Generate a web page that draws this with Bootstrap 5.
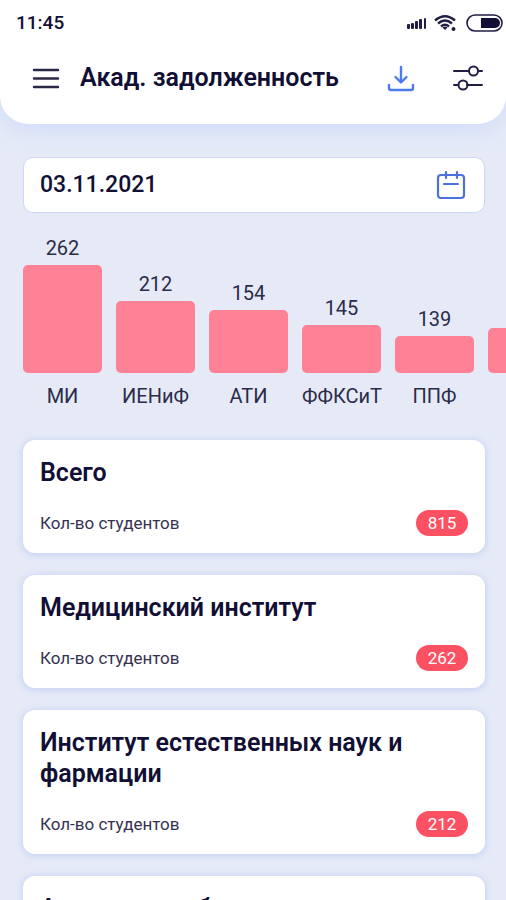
<!DOCTYPE html>
<html lang="ru">
<head>
<meta charset="utf-8">
<meta name="viewport" content="width=device-width, initial-scale=1">
<title>Акад. задолженность</title>
<link href="https://cdn.jsdelivr.net/npm/bootstrap@5.3.0/dist/css/bootstrap.min.css" rel="stylesheet">
<script src="https://cdn.jsdelivr.net/npm/bootstrap@5.3.0/dist/js/bootstrap.bundle.min.js" defer></script>
<style>
body{font-family:Roboto,"Liberation Sans",sans-serif;background:#e5eaf6;color:#120f35;overflow-x:hidden}
.screen{height:100vh;overflow:hidden}
.top-panel{border-radius:0 0 28px 28px;box-shadow:0 6px 24px #cfdcf8;padding-bottom:20px}
.status{height:44px;padding:3px 2px 0 16px;font-size:19px;font-weight:500}
.tools{height:60px;padding:8px 21px 0 31px}
.page-title{font-size:25px;line-height:32px;font-weight:600;margin-left:19px}
.icon-btn{line-height:0}
.filter-btn{margin-left:36px}
.content{padding:33px 21px 0 23px}
.date-box{height:56px;border:1px solid #ccd7f8;border-radius:10px;padding:0 16px}
.date-input{font-size:23px;line-height:32px;font-weight:500;color:#120f35}
.date-input:focus{color:#120f35}
.chart{height:195px;margin-right:-21px;gap:14px;overflow:hidden}
.chart-col{flex:0 0 79px;min-width:0;font-size:20px;line-height:24px;color:#2b2b4a;white-space:nowrap}
.bar{border-radius:5px;background:#ff8196;margin:5px 0 11px}
.cards{margin-top:32px;gap:22px}
.info-card{border-radius:12px;box-shadow:0 1px 7px 1px #c5d2f5;padding:17px}
.info-title{font-size:25px;line-height:31px;font-weight:600}
.info-row{margin-top:22px;font-size:17px;line-height:26px;color:#34324f}
.count{background:#fc5163;width:52px;font-size:17px;line-height:26px;padding:0;font-weight:400}
</style>
</head>
<body>
<div class="screen">
<header class="top-panel bg-white">
  <div class="status d-flex align-items-center justify-content-between">
    <span>11:45</span>
    <svg width="98" height="22" viewBox="0 0 98 22" aria-hidden="true">
      <g fill="#211e43"><rect x="1" y="11" width="3" height="5" rx="1"/><rect x="5" y="10" width="3" height="6" rx="1"/><rect x="9" y="8" width="3" height="8" rx="1"/><rect x="13" y="6" width="3" height="10" rx="1"/><rect x="18" y="5" width="2" height="11" rx="1"/></g>
      <g fill="none" stroke="#211e43" stroke-width="2.4"><path d="M29 7.500Q39 -1 49 7.500M32 10.500Q39 4.500 46 10.500M35 13.500Q39 10 43 13.500"/></g>
      <path d="M36.500 14.500Q39 12.500 41.500 14.500L39 17z" fill="#211e43"/><circle cx="47.500" cy="16" r="2" fill="#211e43"/>
      <rect x="61" y="2" width="35" height="16" rx="8" fill="#fff" stroke="#211e43" stroke-width="1.600"/><path d="M75 5h14a5 5 0 0 1 0 10H75z" fill="#120f35"/>
    </svg>
  </div>
  <div class="tools d-flex align-items-center">
    <button class="icon-btn btn p-0 border-0" type="button" aria-label="Меню"><svg width="30" height="24" viewBox="0 0 30 24" fill="none" stroke="#2a2847" stroke-width="2.400" stroke-linecap="round"><path d="M3 4h24M3 12.500h24M3 21h24"/></svg></button>
    <h1 class="page-title mb-0 me-auto text-nowrap">Акад. задолженность</h1>
    <button class="icon-btn btn p-0 border-0" type="button" aria-label="Скачать"><svg width="28" height="28" viewBox="0 0 28 28" fill="none" stroke="#4c7bf0" stroke-width="2.400" stroke-linecap="round" stroke-linejoin="round"><path d="M14 3v15M8.500 13l5.500 5.500 5.500-5.500M2 21v3q0 2 2 2h20q2 0 2-2v-3"/></svg></button>
    <button class="filter-btn icon-btn btn p-0 border-0" type="button" aria-label="Фильтры"><svg width="34" height="28" viewBox="0 0 34 28" fill="none" stroke="#211e43" stroke-width="2" stroke-linecap="round"><path d="M3 7h15M28 7h3M3 21h4M16 21h15"/><circle cx="22.500" cy="7" r="4.500"/><circle cx="12" cy="21" r="4.500"/></svg></button>
  </div>
</header>
<main class="content">
  <div class="date-box d-flex align-items-center bg-white">
    <input class="date-input form-control border-0 p-0 shadow-none" type="text" value="03.11.2021" aria-label="Дата">
    <button class="icon-btn btn p-0 border-0" type="button" aria-label="Выбрать дату"><svg width="34" height="32" viewBox="0 0 34 32" fill="none" stroke="#4c70dc" stroke-width="2.200" stroke-linecap="round"><rect x="4" y="6" width="26" height="23" rx="3"/><path d="M12 3v6M23 3v6M10 15h14"/></svg></button>
  </div>
  <section class="chart d-flex align-items-end text-center" aria-label="Задолженность по институтам">
    <div class="chart-col">262<div class="bar" style="height:108px"></div>МИ</div>
    <div class="chart-col">212<div class="bar" style="height:72px"></div>ИЕНиФ</div>
    <div class="chart-col">154<div class="bar" style="height:63px"></div>АТИ</div>
    <div class="chart-col">145<div class="bar" style="height:48px"></div>ФФКСиТ</div>
    <div class="chart-col">139<div class="bar" style="height:37px"></div>ППФ</div>
    <div class="chart-col"><br><div class="bar" style="height:45px"></div>ФОП</div>
  </section>
  <section class="cards d-flex flex-column">
    <article class="info-card card border-0"><h2 class="info-title mb-0">Всего</h2><div class="info-row d-flex justify-content-between"><span>Кол-во студентов</span><span class="count badge rounded-pill">815</span></div></article>
    <article class="info-card card border-0"><h2 class="info-title mb-0">Медицинский институт</h2><div class="info-row d-flex justify-content-between"><span>Кол-во студентов</span><span class="count badge rounded-pill">262</span></div></article>
    <article class="info-card card border-0"><h2 class="info-title mb-0">Институт естественных наук и фармации</h2><div class="info-row d-flex justify-content-between"><span>Кол-во студентов</span><span class="count badge rounded-pill">212</span></div></article>
    <article class="info-card card border-0"><h2 class="info-title mb-0">Агрономия и биотехнологии</h2><div class="info-row d-flex justify-content-between"><span>Кол-во студентов</span><span class="count badge rounded-pill">154</span></div></article>
  </section>
</main>
</div>
</body>
</html>
